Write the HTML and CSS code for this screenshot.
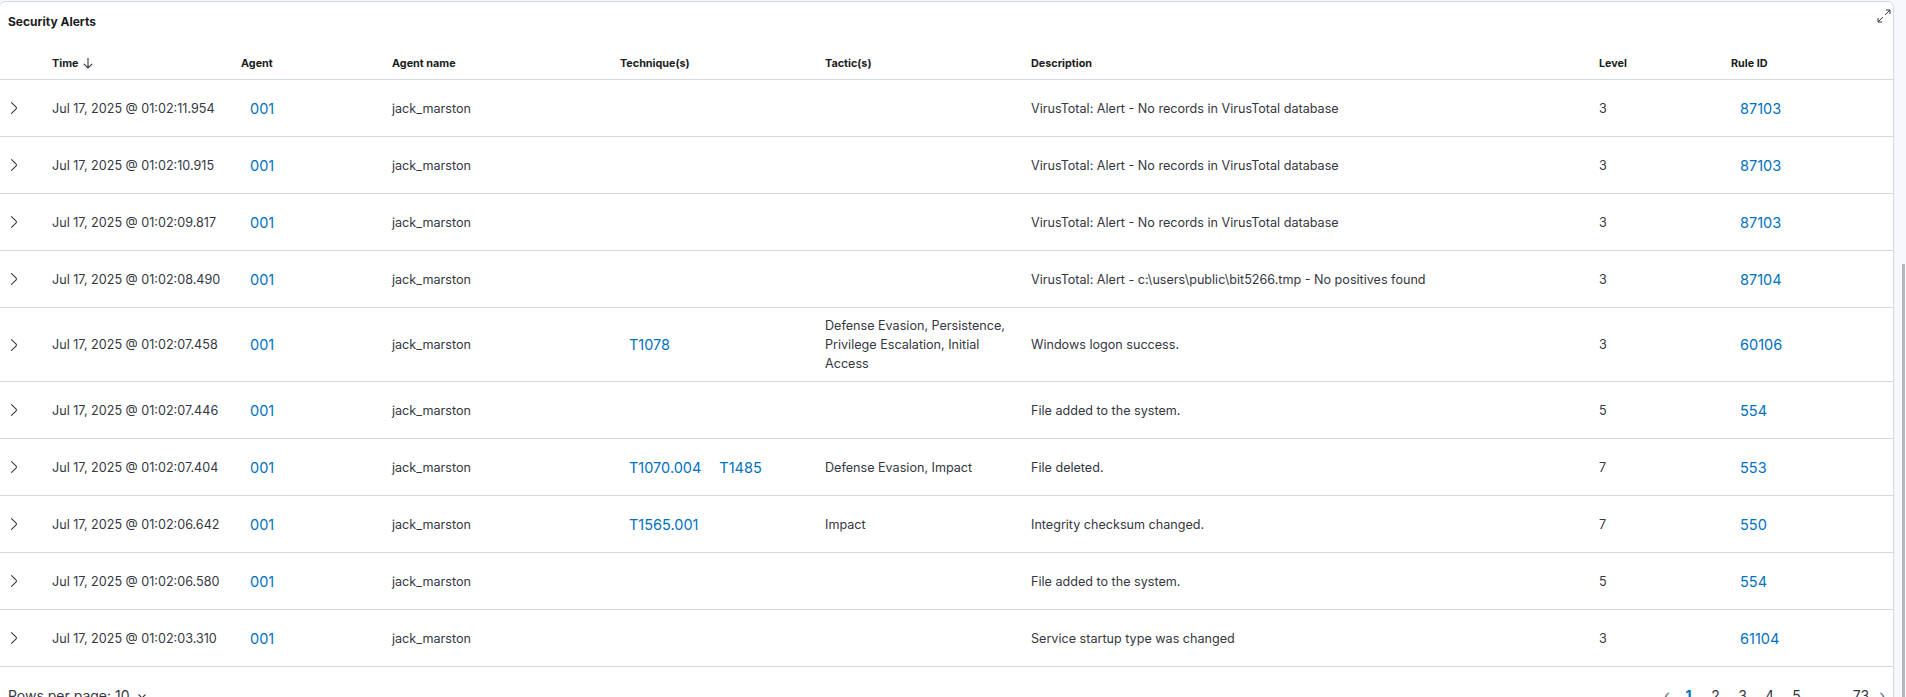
FILE: index.html
```html
<!DOCTYPE html>
<html lang="en">
<head>
<meta charset="utf-8">
<title>Security Alerts</title>
<link rel="stylesheet" href="styles.css">
</head>
<body>
<div class="page">
  <section class="panel">
    <div class="panel-head">
      <h2 class="title">Security Alerts</h2>
      <svg class="expand" width="16" height="16" viewBox="0 0 16 16" fill="none" stroke="#343741" stroke-width="1">
        <path d="M2 10v4h4M2 14l5-5M14 6V2h-4M14 2L9 7"/>
      </svg>
    </div>
    <div class="table">
      <div class="row head">
        <div class="cell"></div>
        <div class="cell">Time <svg class="sort" width="12" height="12" viewBox="0 0 12 12" fill="none" stroke="#343741" stroke-width="1.1"><path d="M6 1v10M1.8 6.8L6 11l4.2-4.2"/></svg></div>
        <div class="cell">Agent</div>
        <div class="cell">Agent name</div>
        <div class="cell">Technique(s)</div>
        <div class="cell">Tactic(s)</div>
        <div class="cell">Description</div>
        <div class="cell">Level</div>
        <div class="cell">Rule ID</div>
      </div>

      <div class="row">
        <div class="cell chev"><svg width="16" height="16" viewBox="0 0 16 16"><path fill="#343741" d="M5.157 13.069l4.611-4.685a.546.546 0 000-.768L5.158 2.93a.552.552 0 010-.771.53.53 0 01.759 0l4.61 4.684c.631.641.63 1.672 0 2.312l-4.61 4.684a.53.53 0 01-.76 0 .552.552 0 010-.771z"/></svg></div>
        <div class="cell time">Jul 17, 2025 @ 01:02:11.954</div>
        <div class="cell"><a class="link">001</a></div>
        <div class="cell">jack_marston</div>
        <div class="cell"></div>
        <div class="cell"></div>
        <div class="cell">VirusTotal: Alert - No records in VirusTotal database</div>
        <div class="cell">3</div>
        <div class="cell"><a class="link">87103</a></div>
      </div>

      <div class="row">
        <div class="cell chev"><svg width="16" height="16" viewBox="0 0 16 16"><path fill="#343741" d="M5.157 13.069l4.611-4.685a.546.546 0 000-.768L5.158 2.93a.552.552 0 010-.771.53.53 0 01.759 0l4.61 4.684c.631.641.63 1.672 0 2.312l-4.61 4.684a.53.53 0 01-.76 0 .552.552 0 010-.771z"/></svg></div>
        <div class="cell time">Jul 17, 2025 @ 01:02:10.915</div>
        <div class="cell"><a class="link">001</a></div>
        <div class="cell">jack_marston</div>
        <div class="cell"></div>
        <div class="cell"></div>
        <div class="cell">VirusTotal: Alert - No records in VirusTotal database</div>
        <div class="cell">3</div>
        <div class="cell"><a class="link">87103</a></div>
      </div>

      <div class="row">
        <div class="cell chev"><svg width="16" height="16" viewBox="0 0 16 16"><path fill="#343741" d="M5.157 13.069l4.611-4.685a.546.546 0 000-.768L5.158 2.93a.552.552 0 010-.771.53.53 0 01.759 0l4.61 4.684c.631.641.63 1.672 0 2.312l-4.61 4.684a.53.53 0 01-.76 0 .552.552 0 010-.771z"/></svg></div>
        <div class="cell time">Jul 17, 2025 @ 01:02:09.817</div>
        <div class="cell"><a class="link">001</a></div>
        <div class="cell">jack_marston</div>
        <div class="cell"></div>
        <div class="cell"></div>
        <div class="cell">VirusTotal: Alert - No records in VirusTotal database</div>
        <div class="cell">3</div>
        <div class="cell"><a class="link">87103</a></div>
      </div>

      <div class="row">
        <div class="cell chev"><svg width="16" height="16" viewBox="0 0 16 16"><path fill="#343741" d="M5.157 13.069l4.611-4.685a.546.546 0 000-.768L5.158 2.93a.552.552 0 010-.771.53.53 0 01.759 0l4.61 4.684c.631.641.63 1.672 0 2.312l-4.61 4.684a.53.53 0 01-.76 0 .552.552 0 010-.771z"/></svg></div>
        <div class="cell time">Jul 17, 2025 @ 01:02:08.490</div>
        <div class="cell"><a class="link">001</a></div>
        <div class="cell">jack_marston</div>
        <div class="cell"></div>
        <div class="cell"></div>
        <div class="cell">VirusTotal: Alert - c:\users\public\bit5266.tmp - No positives found</div>
        <div class="cell">3</div>
        <div class="cell"><a class="link">87104</a></div>
      </div>

      <div class="row">
        <div class="cell chev"><svg width="16" height="16" viewBox="0 0 16 16"><path fill="#343741" d="M5.157 13.069l4.611-4.685a.546.546 0 000-.768L5.158 2.93a.552.552 0 010-.771.53.53 0 01.759 0l4.61 4.684c.631.641.63 1.672 0 2.312l-4.61 4.684a.53.53 0 01-.76 0 .552.552 0 010-.771z"/></svg></div>
        <div class="cell time">Jul 17, 2025 @ 01:02:07.458</div>
        <div class="cell"><a class="link">001</a></div>
        <div class="cell">jack_marston</div>
        <div class="cell"><a class="link">T1078</a></div>
        <div class="cell tactic">Defense Evasion, Persistence, Privilege Escalation, Initial Access</div>
        <div class="cell">Windows logon success.</div>
        <div class="cell">3</div>
        <div class="cell"><a class="link">60106</a></div>
      </div>

      <div class="row">
        <div class="cell chev"><svg width="16" height="16" viewBox="0 0 16 16"><path fill="#343741" d="M5.157 13.069l4.611-4.685a.546.546 0 000-.768L5.158 2.93a.552.552 0 010-.771.53.53 0 01.759 0l4.61 4.684c.631.641.63 1.672 0 2.312l-4.61 4.684a.53.53 0 01-.76 0 .552.552 0 010-.771z"/></svg></div>
        <div class="cell time">Jul 17, 2025 @ 01:02:07.446</div>
        <div class="cell"><a class="link">001</a></div>
        <div class="cell">jack_marston</div>
        <div class="cell"></div>
        <div class="cell"></div>
        <div class="cell">File added to the system.</div>
        <div class="cell">5</div>
        <div class="cell"><a class="link">554</a></div>
      </div>

      <div class="row">
        <div class="cell chev"><svg width="16" height="16" viewBox="0 0 16 16"><path fill="#343741" d="M5.157 13.069l4.611-4.685a.546.546 0 000-.768L5.158 2.93a.552.552 0 010-.771.53.53 0 01.759 0l4.61 4.684c.631.641.63 1.672 0 2.312l-4.61 4.684a.53.53 0 01-.76 0 .552.552 0 010-.771z"/></svg></div>
        <div class="cell time">Jul 17, 2025 @ 01:02:07.404</div>
        <div class="cell"><a class="link">001</a></div>
        <div class="cell">jack_marston</div>
        <div class="cell techs"><a class="link">T1070.004</a><a class="link">T1485</a></div>
        <div class="cell tactic">Defense Evasion, Impact</div>
        <div class="cell">File deleted.</div>
        <div class="cell">7</div>
        <div class="cell"><a class="link">553</a></div>
      </div>

      <div class="row">
        <div class="cell chev"><svg width="16" height="16" viewBox="0 0 16 16"><path fill="#343741" d="M5.157 13.069l4.611-4.685a.546.546 0 000-.768L5.158 2.93a.552.552 0 010-.771.53.53 0 01.759 0l4.61 4.684c.631.641.63 1.672 0 2.312l-4.61 4.684a.53.53 0 01-.76 0 .552.552 0 010-.771z"/></svg></div>
        <div class="cell time">Jul 17, 2025 @ 01:02:06.642</div>
        <div class="cell"><a class="link">001</a></div>
        <div class="cell">jack_marston</div>
        <div class="cell"><a class="link">T1565.001</a></div>
        <div class="cell tactic">Impact</div>
        <div class="cell">Integrity checksum changed.</div>
        <div class="cell">7</div>
        <div class="cell"><a class="link">550</a></div>
      </div>

      <div class="row">
        <div class="cell chev"><svg width="16" height="16" viewBox="0 0 16 16"><path fill="#343741" d="M5.157 13.069l4.611-4.685a.546.546 0 000-.768L5.158 2.93a.552.552 0 010-.771.53.53 0 01.759 0l4.61 4.684c.631.641.63 1.672 0 2.312l-4.61 4.684a.53.53 0 01-.76 0 .552.552 0 010-.771z"/></svg></div>
        <div class="cell time">Jul 17, 2025 @ 01:02:06.580</div>
        <div class="cell"><a class="link">001</a></div>
        <div class="cell">jack_marston</div>
        <div class="cell"></div>
        <div class="cell"></div>
        <div class="cell">File added to the system.</div>
        <div class="cell">5</div>
        <div class="cell"><a class="link">554</a></div>
      </div>

      <div class="row">
        <div class="cell chev"><svg width="16" height="16" viewBox="0 0 16 16"><path fill="#343741" d="M5.157 13.069l4.611-4.685a.546.546 0 000-.768L5.158 2.93a.552.552 0 010-.771.53.53 0 01.759 0l4.61 4.684c.631.641.63 1.672 0 2.312l-4.61 4.684a.53.53 0 01-.76 0 .552.552 0 010-.771z"/></svg></div>
        <div class="cell time">Jul 17, 2025 @ 01:02:03.310</div>
        <div class="cell"><a class="link">001</a></div>
        <div class="cell">jack_marston</div>
        <div class="cell"></div>
        <div class="cell"></div>
        <div class="cell">Service startup type was changed</div>
        <div class="cell">3</div>
        <div class="cell"><a class="link">61104</a></div>
      </div>
    </div>
    <div class="footer">
      <div class="rows-per-page">Rows per page: 10 <svg class="caret" width="12" height="12" viewBox="0 0 12 12" fill="none" stroke="#343741" stroke-width="1.1"><path d="M2.5 4.5L6 8l3.5-3.5"/></svg></div>
      <nav class="pager">
        <span class="pg arrow">‹</span>
        <span class="pg current">1</span>
        <span class="pg">2</span>
        <span class="pg">3</span>
        <span class="pg">4</span>
        <span class="pg">5</span>
        <span class="pg ellipsis">…</span>
        <span class="pg last">73</span>
        <span class="pg arrow">›</span>
      </nav>
    </div>
  </section>
  <div class="scrollbar"><div class="thumb"></div></div>
</div>
</body>
</html>
```

FILE: styles.css
```css
* { box-sizing: border-box; }
html, body {
  margin: 0;
  padding: 0;
  height: 697px;
  overflow: hidden;
  background: #f7f8fc;
  font-family: Inter, "Noto Sans", sans-serif;
  color: #343741;
}
.page {
  display: flex;
  align-items: flex-start;
  height: 697px;
}
.panel {
  flex: 1;
  margin-top: 1px;
  margin-left: -1px;
  background: #fff;
  border: 1px solid #d3dae6;
  border-radius: 6px;
  min-height: 720px;
}
.panel-head {
  display: flex;
  justify-content: space-between;
  align-items: flex-start;
}
.title {
  margin: 0;
  padding: 10px 0 16px 8px;
  font-size: 12px;
  line-height: 19px;
  font-weight: 700;
  color: #1a1c21;
}
.expand {
  margin-top: 6px;
  margin-right: 1px;
}
.row {
  display: grid;
  grid-template-columns: 44px 189px 151px 228px 205px 206px 568px 132px 1fr;
  border-bottom: 1px solid #d3dae6;
  min-height: 57px;
  font-size: 12.6px;
  line-height: 19px;
}
.row.head {
  min-height: 33px;
  font-size: 10.8px;
  font-weight: 700;
  color: #1a1c21;
}
.cell {
  display: flex;
  align-items: center;
  padding: 8px 8px;
}
.row.head .cell {
  padding: 0 8px;
  gap: 4px;
}
.time { white-space: nowrap; }
.sort { display: block; }
.chev {
  padding-left: 6px;
}
.chev svg { display: block; }
.link {
  color: #0071c2;
  font-size: 14.5px;
  margin-left: 9px;
  cursor: pointer;
}
.techs .link + .link { margin-left: 18px; }
.footer {
  display: flex;
  justify-content: space-between;
  align-items: flex-start;
  padding: 19px 1px 0 8px;
  font-size: 14px;
  line-height: 19px;
}
.rows-per-page {
  display: flex;
  align-items: center;
  gap: 6px;
}
.caret { display: block; }
.pager {
  display: flex;
}
.pg {
  width: 27px;
  text-align: center;
  font-size: 14px;
  color: #343741;
}
.pg.arrow:first-child { margin-right: -2px; }
.pg.current {
  color: #0071c2;
  font-weight: 700;
}
.pg.ellipsis { width: 40px; }
.pg.last { width: 22px; }
.pg.arrow { width: 20px; color: #69707d; font-size: 16px; }
.scrollbar {
  width: 12px;
  height: 697px;
  padding-top: 264px;
  display: flex;
  justify-content: flex-end;
  padding-right: 1px;
}
.thumb {
  width: 3px;
  height: 600px;
  background: #b5b7c0;
}
```
